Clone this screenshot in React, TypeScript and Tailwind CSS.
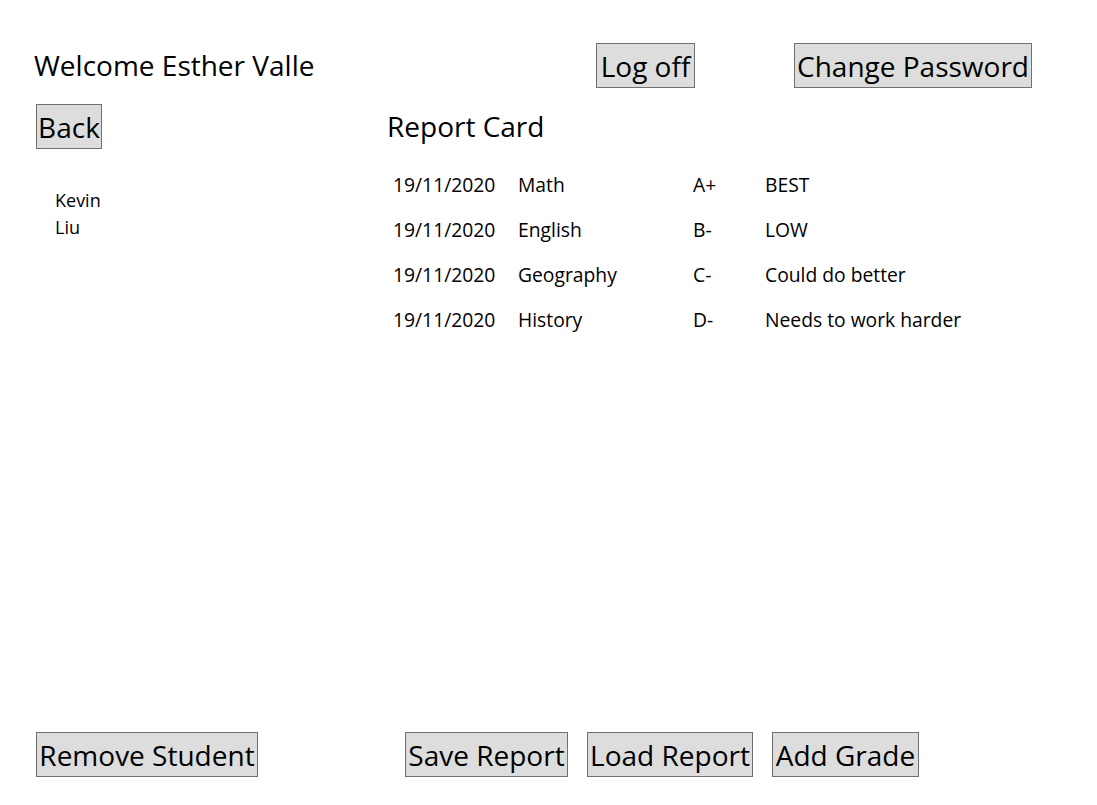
import React from "react";

const font = { fontFamily: '"Open Sans", "Noto Sans", sans-serif' };

function WinButton({ label, width }: { label: string; width: string }) {
  return (
    <button
      className={`${width} h-[45px] bg-[#dddddd] border border-[#707070] text-black text-[28px] leading-none flex items-center justify-center whitespace-nowrap`}
    >
      {label}
    </button>
  );
}

const grades = [
  { date: "19/11/2020", subject: "Math", grade: "A+", comment: "BEST" },
  { date: "19/11/2020", subject: "English", grade: "B-", comment: "LOW" },
  { date: "19/11/2020", subject: "Geography", grade: "C-", comment: "Could do better" },
  { date: "19/11/2020", subject: "History", grade: "D-", comment: "Needs to work harder" },
];

export default function App() {
  return (
    <div className="w-[1097px] h-[805px] bg-white text-black flex flex-col" style={font}>
      <div className="flex items-center pt-[43px]">
        <div className="w-[596px] pl-[34px] text-[28px] leading-none pb-[2px]">Welcome Esther Valle</div>
        <WinButton label="Log off" width="w-[99px]" />
        <div className="w-[99px]" />
        <WinButton label="Change Password" width="w-[238px]" />
      </div>

      <div className="flex mt-[16px]">
        <div className="w-[387px] pl-[36px]">
          <WinButton label="Back" width="w-[66px]" />
          <div className="pl-[19px] pt-[38px] text-[18px] leading-[27px]">
            <div>Kevin</div>
            <div>Liu</div>
          </div>
        </div>
        <div className="flex flex-col">
          <div className="text-[28px] leading-none pt-[8px]">Report Card</div>
          <div className="pt-[23px] pl-[6px] text-[19.3px]">
            {grades.map((g) => (
              <div key={g.subject} className="flex h-[45px] items-center">
                <div className="w-[125px]">{g.date}</div>
                <div className="w-[175px]">{g.subject}</div>
                <div className="w-[72px]">{g.grade}</div>
                <div>{g.comment}</div>
              </div>
            ))}
          </div>
        </div>
      </div>

      <div className="flex-1" />

      <div className="flex items-center pb-[28px] pl-[36px]">
        <WinButton label="Remove Student" width="w-[222px]" />
        <div className="w-[147px]" />
        <div className="flex gap-[19px]">
          <WinButton label="Save Report" width="w-[163px]" />
          <WinButton label="Load Report" width="w-[166px]" />
          <WinButton label="Add Grade" width="w-[147px]" />
        </div>
      </div>
    </div>
  );
}
